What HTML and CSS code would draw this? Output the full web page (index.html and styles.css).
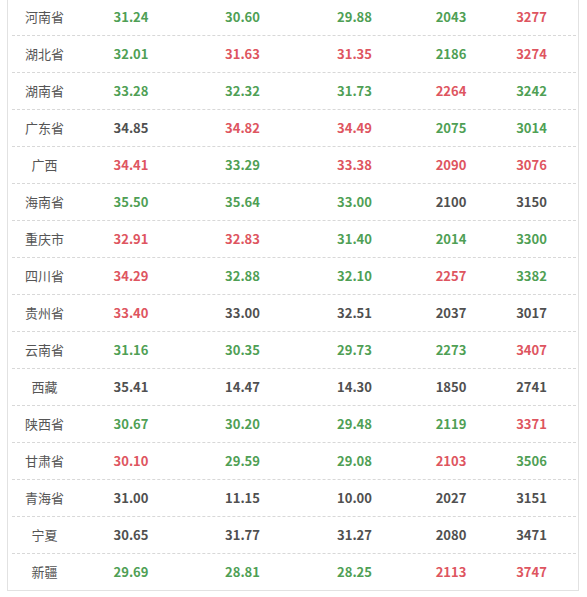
FILE: index.html
```html
<!DOCTYPE html>
<html lang="zh-CN">
<head>
<meta charset="utf-8">
<title>油价</title>
<link rel="stylesheet" href="styles.css">
</head>
<body>
<div class="table">
  <div class="row"><span class="name">河南省</span><span class="num g">31.24</span><span class="num g">30.60</span><span class="num g">29.88</span><span class="num g">2043</span><span class="num r">3277</span></div>
  <div class="row"><span class="name">湖北省</span><span class="num g">32.01</span><span class="num r">31.63</span><span class="num r">31.35</span><span class="num g">2186</span><span class="num r">3274</span></div>
  <div class="row"><span class="name">湖南省</span><span class="num g">33.28</span><span class="num g">32.32</span><span class="num g">31.73</span><span class="num r">2264</span><span class="num g">3242</span></div>
  <div class="row"><span class="name">广东省</span><span class="num d">34.85</span><span class="num r">34.82</span><span class="num r">34.49</span><span class="num g">2075</span><span class="num g">3014</span></div>
  <div class="row"><span class="name">广西</span><span class="num r">34.41</span><span class="num g">33.29</span><span class="num r">33.38</span><span class="num r">2090</span><span class="num r">3076</span></div>
  <div class="row"><span class="name">海南省</span><span class="num g">35.50</span><span class="num g">35.64</span><span class="num g">33.00</span><span class="num d">2100</span><span class="num d">3150</span></div>
  <div class="row"><span class="name">重庆市</span><span class="num r">32.91</span><span class="num r">32.83</span><span class="num g">31.40</span><span class="num g">2014</span><span class="num g">3300</span></div>
  <div class="row"><span class="name">四川省</span><span class="num r">34.29</span><span class="num g">32.88</span><span class="num g">32.10</span><span class="num r">2257</span><span class="num g">3382</span></div>
  <div class="row"><span class="name">贵州省</span><span class="num r">33.40</span><span class="num d">33.00</span><span class="num d">32.51</span><span class="num d">2037</span><span class="num d">3017</span></div>
  <div class="row"><span class="name">云南省</span><span class="num g">31.16</span><span class="num g">30.35</span><span class="num g">29.73</span><span class="num g">2273</span><span class="num r">3407</span></div>
  <div class="row"><span class="name">西藏</span><span class="num d">35.41</span><span class="num d">14.47</span><span class="num d">14.30</span><span class="num d">1850</span><span class="num d">2741</span></div>
  <div class="row"><span class="name">陕西省</span><span class="num g">30.67</span><span class="num g">30.20</span><span class="num g">29.48</span><span class="num g">2119</span><span class="num r">3371</span></div>
  <div class="row"><span class="name">甘肃省</span><span class="num r">30.10</span><span class="num g">29.59</span><span class="num g">29.08</span><span class="num r">2103</span><span class="num g">3506</span></div>
  <div class="row"><span class="name">青海省</span><span class="num d">31.00</span><span class="num d">11.15</span><span class="num d">10.00</span><span class="num d">2027</span><span class="num d">3151</span></div>
  <div class="row"><span class="name">宁夏</span><span class="num d">30.65</span><span class="num d">31.77</span><span class="num d">31.27</span><span class="num d">2080</span><span class="num d">3471</span></div>
  <div class="row"><span class="name">新疆</span><span class="num g">29.69</span><span class="num g">28.81</span><span class="num g">28.25</span><span class="num r">2113</span><span class="num r">3747</span></div>
</div>
</body>
</html>
```
FILE: styles.css
```css
html, body {
  margin: 0;
  padding: 0;
  background: #ffffff;
}
body {
  font-family: "Noto Sans CJK SC", "Noto Sans", sans-serif;
  font-size: 13px;
}
.table {
  margin: -2px 0 0 7px;
  width: 572px;
  box-sizing: border-box;
  border: 1px solid #e2e2e2;
  padding: 0 2px 0 4px;
}
.row {
  display: grid;
  grid-template-columns: 65px 108px 115px 109px 84px 77px;
  height: 36px;
  align-items: center;
  border-bottom: 1px dashed #d8d8d8;
}
.row:last-child {
  border-bottom: none;
}
.name, .num {
  text-align: center;
  line-height: 36px;
}
.name {
  color: #555555;
}
.num {
  font-weight: bold;
}
.g { color: #4f9f55; }
.r { color: #de5560; }
.d { color: #505050; }
```
